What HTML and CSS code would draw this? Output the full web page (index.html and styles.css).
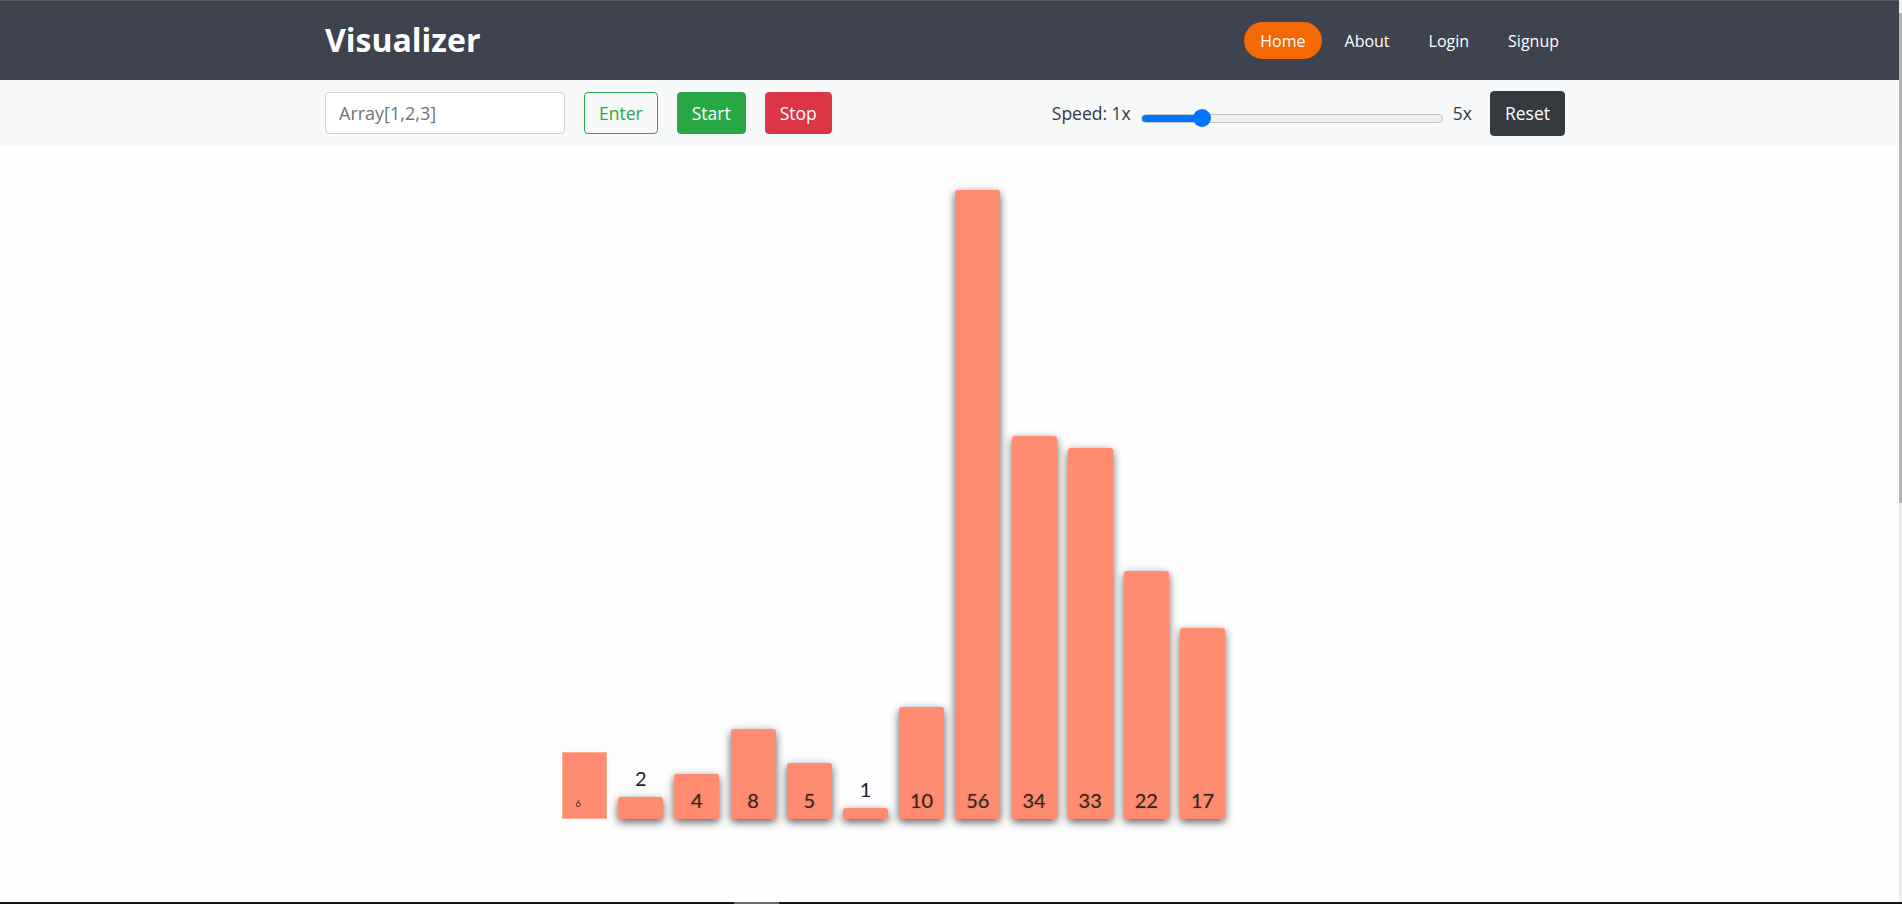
FILE: index.html
```html
<!DOCTYPE html>
<html lang="en">
<head>
<meta charset="utf-8">
<title>Visualizer</title>
<link rel="stylesheet" href="styles.css">
</head>
<body>
<nav class="navbar">
  <div class="container nav-inner">
    <a class="brand" href="#">Visualizer</a>
    <ul class="nav-links">
      <li><a class="nav-link active" href="#">Home</a></li>
      <li><a class="nav-link" href="#">About</a></li>
      <li><a class="nav-link" href="#">Login</a></li>
      <li><a class="nav-link" href="#">Signup</a></li>
    </ul>
  </div>
</nav>

<div class="toolbar">
  <div class="container toolbar-inner">
    <div class="left-group">
      <input class="array-input" type="text" placeholder="Array[1,2,3]">
      <button class="btn btn-outline-success">Enter</button>
      <button class="btn btn-success">Start</button>
      <button class="btn btn-danger">Stop</button>
    </div>
    <div class="right-group">
      <span class="speed-label">Speed: 1x</span>
      <input class="speed-range" type="range" min="0" max="100" value="18">
      <span class="speed-label">5x</span>
      <button class="btn btn-dark">Reset</button>
    </div>
  </div>
</div>

<main class="stage">
  <div class="container">
    <div class="chart">
      <div class="bar-col"><div class="bar current" style="height:67px"><span class="bar-label tiny">6</span></div></div>
      <div class="bar-col"><span class="bar-label outside">2</span><div class="bar" style="height:22px"></div></div>
      <div class="bar-col"><div class="bar" style="height:45px"><span class="bar-label">4</span></div></div>
      <div class="bar-col"><div class="bar" style="height:90px"><span class="bar-label">8</span></div></div>
      <div class="bar-col"><div class="bar" style="height:56px"><span class="bar-label">5</span></div></div>
      <div class="bar-col"><span class="bar-label outside">1</span><div class="bar" style="height:11px"></div></div>
      <div class="bar-col"><div class="bar" style="height:112px"><span class="bar-label">10</span></div></div>
      <div class="bar-col"><div class="bar" style="height:629px"><span class="bar-label">56</span></div></div>
      <div class="bar-col"><div class="bar" style="height:383px"><span class="bar-label">34</span></div></div>
      <div class="bar-col"><div class="bar" style="height:371px"><span class="bar-label">33</span></div></div>
      <div class="bar-col"><div class="bar" style="height:248px"><span class="bar-label">22</span></div></div>
      <div class="bar-col"><div class="bar" style="height:191px"><span class="bar-label">17</span></div></div>
    </div>
  </div>
</main>

<div class="scroll-strip"><div class="scroll-thumb"></div></div>
<div class="bottom-strip"><div class="bottom-thumb"></div></div>
</body>
</html>
```

FILE: styles.css
```css
* {
  box-sizing: border-box;
}

html, body {
  margin: 0;
  padding: 0;
  background: #fefefe;
  font-family: "Open Sans", "Liberation Sans", sans-serif;
  overflow: hidden;
}

.container {
  width: 1252px;
  margin: 0 auto;
}

/* Navbar */
.navbar {
  height: 80px;
  background: #3f424f;
  border-top: 1px solid #5d5d60;
}

.nav-inner {
  height: 100%;
  display: flex;
  align-items: center;
  justify-content: space-between;
}

.brand {
  color: #ffffff;
  font-family: "Open Sans", sans-serif;
  font-weight: 700;
  font-size: 32px;
  text-decoration: none;
  letter-spacing: 0;
  margin-top: -2px;
}

.nav-links {
  list-style: none;
  margin: 0 2px 0 0;
  padding: 0;
  display: flex;
  gap: 7px;
}

.nav-link {
  display: block;
  color: #ffffff;
  text-decoration: none;
  font-size: 16px;
  line-height: 24px;
  padding: 6.5px 16px;
  border-radius: 19px;
}

.nav-link.active {
  background: #f26905;
}

/* Toolbar */
.toolbar {
  height: 66px;
  background: #f7f8fa;
}

.toolbar-inner {
  height: 100%;
  display: flex;
  align-items: center;
  justify-content: space-between;
  padding-right: 12px;
}

.left-group,
.right-group {
  display: flex;
  align-items: center;
}

.left-group {
  gap: 19px;
}

.array-input {
  width: 240px;
  height: 42px;
  border: 1px solid #ced4da;
  border-radius: 4px;
  padding: 0 13px;
  font-family: "Open Sans", sans-serif;
  font-size: 18px;
  color: #495057;
  background: #ffffff;
}

.array-input::placeholder {
  color: #6c757d;
}

.btn {
  font-family: "Open Sans", sans-serif;
  font-size: 17.5px;
  line-height: 24px;
  padding: 8px 14px;
  border: 1px solid transparent;
  border-radius: 4px;
  cursor: pointer;
}

.btn-outline-success {
  color: #28a745;
  border-color: #28a745;
  background: transparent;
}

.btn-success {
  color: #ffffff;
  background: #28a745;
  border-color: #28a745;
}

.btn-danger {
  color: #ffffff;
  background: #dc3545;
  border-color: #dc3545;
}

.btn-dark {
  color: #ffffff;
  background: #343a40;
  border-color: #343a40;
  font-size: 17.5px;
  line-height: 25px;
  padding: 9px 14px;
  margin-left: 18px;
}

.speed-label {
  font-size: 17.5px;
  color: #343a40;
}

.speed-range {
  -webkit-appearance: none;
  appearance: none;
  width: 302px;
  height: 9px;
  margin: 10px 10px 0 10px;
  border: 1px solid #c4c4c4;
  border-radius: 5px;
  background: linear-gradient(to right, #0075ff 0, #0075ff 20%, #efefef 20%, #efefef 100%);
  outline: none;
}

.speed-range::-webkit-slider-thumb {
  -webkit-appearance: none;
  appearance: none;
  width: 18px;
  height: 18px;
  border-radius: 50%;
  background: #0075ff;
  border: none;
}

/* Chart */
.stage {
  height: 758px;
}

.chart {
  height: 673px;
  display: flex;
  align-items: flex-end;
  gap: 11.2px;
  padding-left: 237px;
}

.bar-col {
  width: 45px;
  display: flex;
  flex-direction: column;
  align-items: center;
}

.bar {
  width: 45px;
  background: #ff8c70;
  border-radius: 3px;
  box-shadow: 0 3px 9px rgba(0, 0, 0, 0.65);
  display: flex;
  align-items: flex-end;
  justify-content: center;
}

.bar.current {
  box-shadow: none;
  border-radius: 0;
  border: 1px solid #ffad97;
}

.bar-label {
  font-family: Lato, "Liberation Sans", sans-serif;
  font-size: 20px;
  line-height: 20px;
  color: #2e2620;
  padding-bottom: 9px;
  text-shadow: 0 0 2px rgba(60, 20, 10, 0.3);
}

.bar-label.outside {
  text-shadow: none;
  color: #1e1e1e;
}

.bar-label.tiny {
  font-size: 9px;
  line-height: 9px;
  padding-bottom: 10px;
  padding-right: 13px;
  text-shadow: none;
}

/* Window chrome overlays */
.scroll-strip {
  position: fixed;
  top: 0;
  right: 0;
  width: 3px;
  height: 100%;
  background: #ececec;
}

.scroll-thumb {
  margin-top: 13px;
  height: 490px;
  background: #b4b4b4;
}

.bottom-strip {
  position: fixed;
  left: 0;
  bottom: 0;
  width: 100%;
  height: 2px;
  background: #151515;
}

.bottom-thumb {
  margin-left: 734px;
  width: 45px;
  height: 100%;
  background: #6a6a6a;
}
```
